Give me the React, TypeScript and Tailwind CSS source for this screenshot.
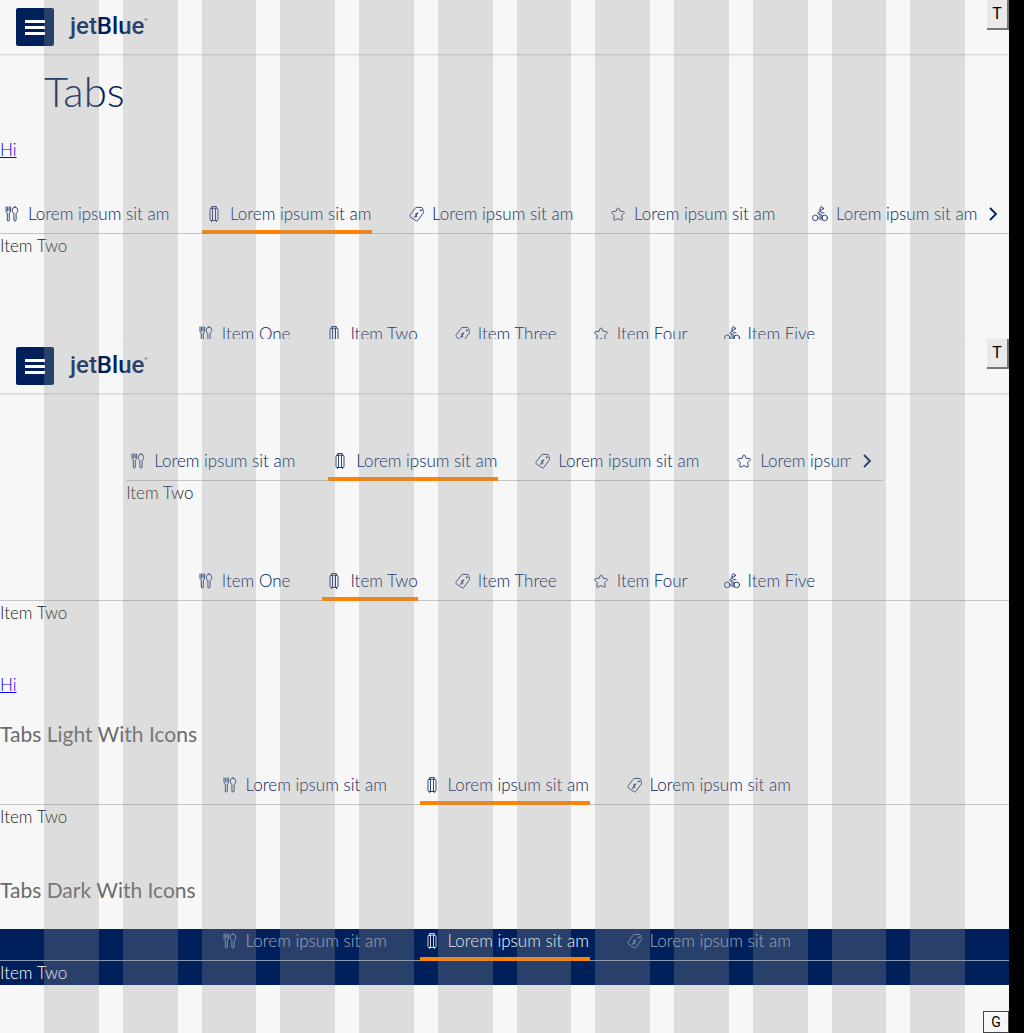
import { useState, type ReactNode } from "react";

type Tab = { label: string; icon: ReactNode };

function Icon({ children }: { children: ReactNode }) {
  return (
    <svg
      aria-hidden="true"
      viewBox="0 0 24 24"
      className="size-6 shrink-0"
      fill="none"
      stroke="currentColor"
      strokeWidth="0.8"
      strokeLinecap="round"
      strokeLinejoin="round"
    >
      {children}
    </svg>
  );
}

const cutlery = (
  <Icon>
    <path d="M6 5v4.2c0 1 .6 1.5 1.3 1.9V18c0 .7.4 1 1 1s1-.3 1-1v-6.900c.8-.4 1.300-.9 1.300-1.900V5M7.600 5v4M9.100 5v4" />
    <path d="M15 5c1.700 0 2.700 1.600 2.700 3.400 0 1.500-.7 2.500-1.600 2.900V18c0 .7-.4 1-1.100 1s-1.100-.3-1.100-1v-6.700c-.9-.4-1.600-1.400-1.600-2.900C12.300 6.600 13.300 5 15 5z" />
  </Icon>
);
const suitcase = (
  <Icon>
    <rect x="8" y="6.200" width="8" height="12.300" rx="1.200" />
    <path d="M9.700 6V4.500h4.600V6M10.500 6.500v12M13.500 6.500v12M9.500 18.700v.900M14.500 18.700v.900" />
  </Icon>
);
const tag = (
  <Icon>
    <path d="M11.200 6.200c.4-.5.900-.8 1.500-.8h4.200c.9 0 1.500.4 1.800 1.200l.7 3c.1.600 0 1.100-.3 1.600l-5 7c-.6.800-1.500 1-2.300.4l-5.200-3.500c-.8-.5-1-1.500-.4-2.300z" />
    <circle cx="16.700" cy="8.300" r=".5" />
    <path d="M13.500 11.600c-.8-.6-2-.2-1.900.7.1.8 1.500.9 1.400 1.800-.1.900-1.300 1.200-2.100.5M13.800 10.700l-3.200 4.600" />
  </Icon>
);
const star = (
  <Icon>
    <path d="M11.300 6.300c.3-.6 1.100-.6 1.400 0l1.400 2.900 3.500.5c.8.100 1.100.9.500 1.500l-2.400 2.400.6 3.600c.1.800-.6 1.200-1.200.9L12 16.600l-3.100 1.500c-.6.300-1.300-.1-1.200-.9l.6-3.600-2.400-2.400c-.6-.6-.3-1.400.5-1.500l3.500-.5z" />
  </Icon>
);
const cyclist = (
  <Icon>
    <circle cx="7.300" cy="15.900" r="2.800" />
    <circle cx="16.700" cy="15.900" r="2.800" />
    <circle cx="13.600" cy="6.400" r="1.600" />
    <path d="M12 7.500v1.200L9.600 11.300l2.400 2v4.500M12.200 8.700l1.200 2h2.500M11.300 11.200l2.600 2v4.600" />
  </Icon>
);

const icons = [cutlery, suitcase, tag, star, cyclist];
const itemNames = ["Item One", "Item Two", "Item Three", "Item Four", "Item Five"];
const itemTabs: Tab[] = itemNames.map((label, i) => ({ label, icon: icons[i] }));
const loremTabs: Tab[] = icons.map((icon) => ({ label: "Lorem ipsum sit am", icon }));

function Tabs({
  tabs,
  wide = false,
  scroll = false,
  dark = false,
  panel = true,
}: {
  tabs: Tab[];
  wide?: boolean;
  scroll?: boolean;
  dark?: boolean;
  panel?: boolean;
}) {
  const [active, setActive] = useState(1);
  return (
    <div className={dark ? "bg-[#00205b] text-white" : "text-[#00205b]"}>
      <div
        className={
          dark
            ? "flex h-8 shadow-[inset_0_-1px_0_#8c9ab5]"
            : "flex h-8 shadow-[inset_0_-1px_0_#c4c4c4]"
        }
      >
        <div
          role="tablist"
          className={`flex min-w-0 flex-1 gap-8 overflow-hidden ${scroll ? "" : "justify-center"}`}
        >
          {tabs.map((tab, i) => (
            <button
              key={i}
              type="button"
              role="tab"
              aria-selected={i === active}
              onClick={() => setActive(i)}
              className={`flex h-8 shrink-0 border-b-4 leading-6 whitespace-nowrap ${
                wide ? "min-w-[170px]" : ""
              } ${i === active ? "border-[#ff8200]" : "border-transparent"}`}
            >
              <span className={`flex gap-1 ${dark && i !== active ? "opacity-60" : ""}`}>
                {tab.icon}
                {tab.label}
              </span>
            </button>
          ))}
        </div>
        {scroll && (
          <button
            type="button"
            aria-label="Next tabs"
            className="flex h-6 w-8 shrink-0 items-center justify-center"
          >
            <svg
              aria-hidden="true"
              viewBox="0 0 16 16"
              className="size-4"
              fill="none"
              stroke="currentColor"
              strokeWidth="1.8"
            >
              <path d="m5 2 6 6-6 6" />
            </svg>
          </button>
        )}
      </div>
      {panel && (
        <div role="tabpanel" className={`leading-6 ${dark ? "text-white" : "text-[#222]"}`}>
          {itemNames[active]}
        </div>
      )}
    </div>
  );
}

function Header() {
  return (
    <header className="flex h-[54px] items-start justify-between shadow-[0_1px_2px_#0000002e]">
      <div className="flex gap-4 pt-2 pl-4">
        <button
          type="button"
          aria-label="Menu"
          className="flex size-[38px] flex-col items-center justify-center gap-[3px] rounded-xs bg-[#00205b]"
        >
          <span className="h-[3px] w-5 bg-white" />
          <span className="h-[3px] w-5 bg-white" />
          <span className="h-[3px] w-5 bg-white" />
        </button>
        <a
          href="#home"
          className="flex items-start font-[Roboto,sans-serif] text-2xl leading-9 font-medium text-[#00205b]"
        >
          jetBlue<span className="text-[4px] leading-6">®</span>
        </a>
      </div>
      <button
        type="button"
        className="h-[30px] w-[22px] border-r-2 border-b-2 border-[#767676] bg-[#e9e9e9] font-[Roboto,sans-serif] text-base leading-6 font-normal text-black"
      >
        T
      </button>
    </header>
  );
}

function Hi() {
  return (
    <a href="#hi" className="block w-fit leading-6 text-[#0000ee] underline">
      Hi
    </a>
  );
}

export default function App() {
  return (
    <div className="min-h-screen bg-black pr-[15px] font-[Lato,sans-serif] text-[17px] font-light">
      <div className="relative min-h-screen bg-[#f7f7f7]">
        <section>
          <Header />
          <h1 className="mt-3 mb-5 h-[52px] px-11 text-[42px] leading-[50px] text-[#00205b]">
            Tabs
          </h1>
          <Hi />
          <div className="mt-10">
            <Tabs tabs={loremTabs} wide scroll />
          </div>
          <div className="mt-16 h-[17px] overflow-hidden">
            <Tabs tabs={itemTabs} panel={false} />
          </div>
        </section>

        <section className="pb-12">
          <Header />
          <div className="mt-14 px-[12.5%]">
            <Tabs tabs={loremTabs} wide scroll />
          </div>
          <div className="mt-16">
            <Tabs tabs={itemTabs} />
          </div>
          <div className="mt-12">
            <Hi />
          </div>
          <h2 className="my-6 h-7 text-[21px] leading-[26px] font-normal text-[#6b6b6b]">
            Tabs Light With Icons
          </h2>
          <Tabs tabs={loremTabs.slice(0, 3)} wide />
          <h2 className="mt-12 mb-6 h-7 text-[21px] leading-[26px] font-normal text-[#6b6b6b]">
            Tabs Dark With Icons
          </h2>
          <Tabs tabs={loremTabs.slice(0, 3)} wide dark />
        </section>

        {/* Column guide */}
        <div
          aria-hidden="true"
          className="pointer-events-none absolute inset-0 grid grid-cols-12 gap-6 px-11"
        >
          {Array.from({ length: 12 }, (_, i) => (
            <div key={i} className="bg-[#999999]/27" />
          ))}
        </div>
        <button
          type="button"
          className="absolute right-0 bottom-0 h-[22px] w-[26px] border border-[#444] bg-[#f7f7f7] font-[Roboto,sans-serif] text-sm leading-5 font-normal text-black"
        >
          G
        </button>
      </div>
    </div>
  );
}
